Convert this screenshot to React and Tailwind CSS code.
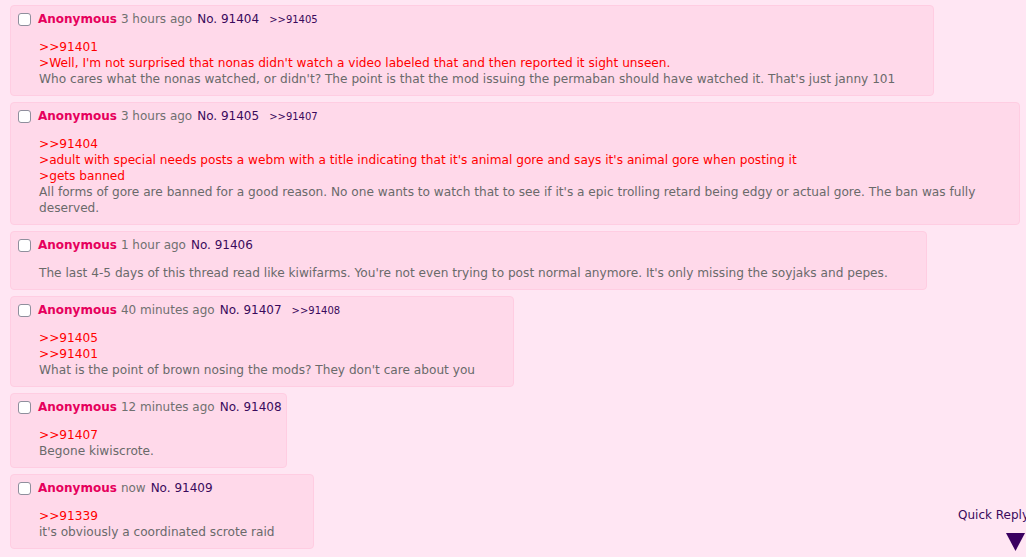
import React from "react";

const posts = [
  {
    no: "91404",
    time: "3 hours ago",
    reply: ">>91405",
    lines: [
      { q: true, t: ">>91401" },
      { q: true, t: ">Well, I'm not surprised that nonas didn't watch a video labeled that and then reported it sight unseen." },
      { q: false, t: "Who cares what the nonas watched, or didn't? The point is that the mod issuing the permaban should have watched it. That's just janny 101" },
    ],
  },
  {
    no: "91405",
    time: "3 hours ago",
    reply: ">>91407",
    lines: [
      { q: true, t: ">>91404" },
      { q: true, t: ">adult with special needs posts a webm with a title indicating that it's animal gore and says it's animal gore when posting it" },
      { q: true, t: ">gets banned" },
      { q: false, t: "All forms of gore are banned for a good reason. No one wants to watch that to see if it's a epic trolling retard being edgy or actual gore. The ban was fully deserved." },
    ],
  },
  {
    no: "91406",
    time: "1 hour ago",
    lines: [
      { q: false, t: "The last 4-5 days of this thread read like kiwifarms. You're not even trying to post normal anymore. It's only missing the soyjaks and pepes." },
    ],
  },
  {
    no: "91407",
    time: "40 minutes ago",
    reply: ">>91408",
    lines: [
      { q: true, t: ">>91405" },
      { q: true, t: ">>91401" },
      { q: false, t: "What is the point of brown nosing the mods? They don't care about you" },
    ],
  },
  {
    no: "91408",
    time: "12 minutes ago",
    lines: [
      { q: true, t: ">>91407" },
      { q: false, t: "Begone kiwiscrote." },
    ],
  },
  {
    no: "91409",
    time: "now",
    lines: [
      { q: true, t: ">>91339" },
      { q: false, t: "it's obviously a coordinated scrote raid" },
    ],
  },
];

function Post({ p }) {
  return (
    <div className="w-fit max-w-full rounded-[4px] border border-[#ffcde2] bg-[#ffd9ea] pl-[7px] pr-[4px] pt-[5px] pb-[8px]">
      <div className="flex h-[17px] items-center whitespace-nowrap text-[12px] leading-[17px]">
        <span className="mr-[7px] inline-block h-[13px] w-[13px] rounded-[3px] border border-[#8f8f9d] bg-white" />
        <span className="font-bold text-[#e6005c]">Anonymous</span>
        <span className="ml-[4px] text-[#707070]">{p.time}</span>
        <span className="ml-[5px] text-[#3a0a5c]">No. {p.no}</span>
        {p.reply && (
          <span className="ml-[10px] text-[10px] text-[#3a0a5c]">{p.reply}</span>
        )}
      </div>
      <div className="ml-[21px] mr-[34px] mt-[11px] text-[12.15px] leading-[16px]">
        {p.lines.map((l, i) => (
          <div key={i} className={l.q ? "text-[#ff0000]" : "text-[#6a6a6a]"}>
            {l.t}
          </div>
        ))}
      </div>
    </div>
  );
}

export default function App() {
  return (
    <div
      className="relative min-h-[557px] overflow-hidden bg-[#ffe6f3] pl-[10px] pr-[6px] pt-[5px]"
      style={{ fontFamily: '"DejaVu Sans", Verdana, sans-serif' }}
    >
      <div className="flex flex-col items-start gap-[6px]">
        {posts.map((p) => (
          <Post key={p.no} p={p} />
        ))}
      </div>
      <div className="absolute left-[958px] top-[507px] whitespace-nowrap text-[12px] leading-[16px] text-[#3a0a5c]">
        Quick Reply
      </div>
      <svg className="absolute left-[1006px] top-[533px]" width="19" height="18" viewBox="0 0 19 18">
        <polygon points="0,0 19,0 9.5,18" fill="#3a0060" />
      </svg>
    </div>
  );
}
